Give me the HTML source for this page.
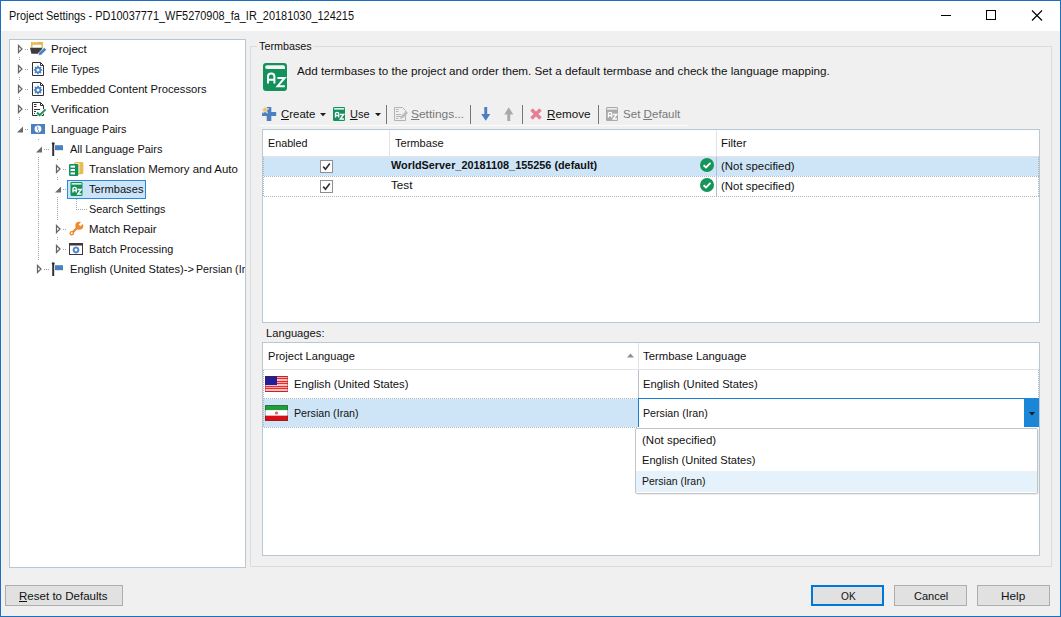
<!DOCTYPE html>
<html><head><meta charset='utf-8'>
<style>
*{box-sizing:border-box;margin:0;padding:0}
html,body{width:1061px;height:617px;overflow:hidden;background:#f0f0f0}
body{position:relative;font-family:"Liberation Sans",sans-serif;font-size:12px;color:#000}
.a{position:absolute}
.t{position:absolute;white-space:nowrap;line-height:14px;font-size:11.5px;transform-origin:0 0;color:#111}
u{text-decoration:none;background:linear-gradient(currentColor,currentColor) 0 100%/100% 1px no-repeat}
.panel{position:absolute;background:#fff;border:1px solid #b9c7d2}
.dv{position:absolute;width:1px;background:repeating-linear-gradient(to bottom,#a3a3a3 0 1px,transparent 1px 2px)}
.dh{position:absolute;height:1px;background:repeating-linear-gradient(to right,#a3a3a3 0 1px,transparent 1px 2px)}
.sep{position:absolute;width:1px;background:#a0a0a0}
.btn{position:absolute;background:#e1e1e1;border:1px solid #adadad}
svg{position:absolute;overflow:visible}

</style></head>
<body>
<div class="a" style="left:0;top:0;width:1061px;height:617px;border:1px solid #1c6fc0"></div>
<div class="a" style="left:1px;top:1px;width:1059px;height:30px;background:#fff"></div>
<div class="a" style="left:941px;top:15px;width:10px;height:1px;background:#000"></div>
<div class="a" style="left:986px;top:10px;width:10px;height:10px;border:1px solid #000"></div>
<svg style="left:1031px;top:10px" width="11" height="11"><path d="M1 0.5L11 10.5M11 0.5L1 10.5" stroke="#000" stroke-width="1.1"/></svg>

<div class="panel" style="left:9px;top:39px;width:237px;height:529px"></div>

<div class="a" style="left:250px;top:46px;width:802px;height:521px;border:1px solid #dcdcdc"></div>
<div class="a" style="left:257px;top:40px;width:56px;height:12px;background:#f0f0f0"></div>

<div class="panel" style="left:262px;top:129px;width:778px;height:194px"></div>
<div class="panel" style="left:262px;top:342px;width:778px;height:214px"></div>

<div class="btn" style="left:5px;top:585px;width:118px;height:21px"></div>
<div class="btn" style="left:811px;top:585px;width:73px;height:21px;border:2px solid #0078d7"></div>
<div class="btn" style="left:894px;top:585px;width:73px;height:21px"></div>
<div class="btn" style="left:977px;top:585px;width:73px;height:21px"></div>

<!-- TABLE 1 content -->
<div class="a" style="left:389px;top:130px;width:1px;height:26px;background:#e3e3e3"></div>
<div class="a" style="left:716px;top:130px;width:1px;height:26px;background:#e3e3e3"></div>
<div class="a" style="left:263px;top:156px;width:776px;height:1px;background:#e3e3e3"></div>
<div class="a" style="left:263px;top:157px;width:776px;height:19px;background:#cde5f7"></div>
<div class="dh" style="left:263px;top:176px;width:776px;background:repeating-linear-gradient(to right,transparent 0 1px,#adbac5 1px 2px)"></div>
<div class="dh" style="left:263px;top:196px;width:776px;background:repeating-linear-gradient(to right,transparent 0 1px,#adbac5 1px 2px)"></div>
<div class="dv" style="left:263px;top:157px;height:40px;background:repeating-linear-gradient(to bottom,#adbac5 0 1px,transparent 1px 2px)"></div>
<div class="dv" style="left:1038px;top:157px;height:40px;background:repeating-linear-gradient(to bottom,#adbac5 0 1px,transparent 1px 2px)"></div>
<div class="a" style="left:716px;top:157px;width:1px;height:39px;background:#b4c0ca"></div>
<div class="a" style="left:320px;top:160px;width:13px;height:13px;border:1px solid #8f8f8f;background:#fff"></div>
<div class="a" style="left:320px;top:180px;width:13px;height:13px;border:1px solid #8f8f8f;background:#fff"></div>
<svg style="left:320px;top:160px" width="13" height="13"><path d="M3.2 6.6L5.5 9.2L9.8 3.6" stroke="#333" stroke-width="1.7" fill="none"/></svg>
<svg style="left:320px;top:180px" width="13" height="13"><path d="M3.2 6.6L5.5 9.2L9.8 3.6" stroke="#333" stroke-width="1.7" fill="none"/></svg>
<svg style="left:700px;top:158px" width="14" height="14"><circle cx="7" cy="7" r="7" fill="#16955a"/><path d="M3.6 7.2L6 9.5L10.5 4.8" stroke="#fff" stroke-width="1.9" fill="none"/></svg>
<svg style="left:700px;top:178px" width="14" height="14"><circle cx="7" cy="7" r="7" fill="#16955a"/><path d="M3.6 7.2L6 9.5L10.5 4.8" stroke="#fff" stroke-width="1.9" fill="none"/></svg>

<!-- TABLE 2 content -->
<div class="a" style="left:263px;top:369px;width:776px;height:1px;background:#e3e3e3"></div>
<div class="a" style="left:638px;top:343px;width:1px;height:26px;background:#e3e3e3"></div>
<div class="a" style="left:638px;top:370px;width:1px;height:28px;background:#b4c0ca"></div>
<svg style="left:627px;top:353px" width="8" height="5"><path d="M0 4.6L3.5 0.6L7 4.6Z" fill="#8f8f8f"/></svg>
<div class="dh" style="left:263px;top:398px;width:776px;background:repeating-linear-gradient(to right,transparent 0 1px,#adbac5 1px 2px)"></div>
<div class="a" style="left:263px;top:399px;width:375px;height:28px;background:#cde5f7"></div>
<div class="dh" style="left:263px;top:427px;width:375px;background:repeating-linear-gradient(to right,transparent 0 1px,#adbac5 1px 2px)"></div>
<div class="dv" style="left:263px;top:370px;height:58px;background:repeating-linear-gradient(to bottom,#adbac5 0 1px,transparent 1px 2px)"></div>
<div class="dv" style="left:1038px;top:370px;height:28px;background:repeating-linear-gradient(to bottom,#adbac5 0 1px,transparent 1px 2px)"></div>
<!-- flags -->
<svg style="left:265px;top:376px" width="23" height="16">
 <rect x="0" y="0" width="23" height="16" fill="#f8a8a8"/>
 <rect y="0" width="23" height="1" fill="#ee2a2a"/><rect y="2" width="23" height="1" fill="#ee2a2a"/><rect y="5" width="23" height="1" fill="#ee2a2a"/><rect y="7" width="23" height="1" fill="#ee2a2a"/><rect y="10" width="23" height="1" fill="#ee2a2a"/><rect y="12" width="23" height="1" fill="#ee2a2a"/><rect y="15" width="23" height="1" fill="#ee2a2a"/>
 <rect y="3.6" width="23" height="0.8" fill="#ffe8e8"/><rect y="8.6" width="23" height="0.8" fill="#ffe8e8"/><rect y="13.6" width="23" height="0.8" fill="#ffe8e8"/>
 <rect x="0" y="0" width="12" height="9" fill="#1f1f9a"/>
 <rect x="0.5" y="0.5" width="22" height="15" fill="none" stroke="rgba(120,20,20,0.35)" stroke-width="1" rx="1"/>
</svg>
<svg style="left:265px;top:405px" width="23" height="16">
 <rect x="0" y="0" width="23" height="5.3" fill="#239c3a"/>
 <rect x="0" y="5.3" width="23" height="5.4" fill="#fff"/>
 <rect x="0" y="10.7" width="23" height="5.3" fill="#d80f16"/>
 <circle cx="11.5" cy="8" r="1.6" fill="#e06060"/>
 <rect x="0.5" y="0.5" width="22" height="15" fill="none" stroke="rgba(40,40,40,0.3)" stroke-width="1" rx="1"/>
</svg>
<!-- combo -->
<div class="a" style="left:638px;top:398px;width:401px;height:29px;background:#fff;border:1px solid #1a7fd4;border-bottom:none"></div>
<div class="a" style="left:1024px;top:398px;width:15px;height:29px;background:#1a86d8"></div>
<svg style="left:1029px;top:412px" width="6" height="4"><path d="M0 0H6L3 3.5Z" fill="#1b1b1b"/></svg>
<!-- dropdown -->
<div class="a" style="left:635px;top:428px;width:403px;height:66px;background:#fff;border:1px solid #c4c4c4;border-radius:2px;box-shadow:1px 1px 1px rgba(0,0,0,0.08)"></div>
<div class="a" style="left:636px;top:471px;width:401px;height:21px;background:#e5f1fb"></div>

<!-- AZ big icon -->
<svg style="left:263px;top:63px" width="24" height="28" viewBox="0 0 24 28">
 <rect width="24" height="28" rx="3" fill="#12925a"/>
 <path d="M4 2.2H20.5A1.9 1.9 0 0 1 22 4.1V6H4A1.9 1.9 0 0 1 4 2.2Z" fill="#f4f4f4"/>
 <path d="M5 20.5V13.4Q5 10.6 8.2 10.6Q11.4 10.6 11.4 13.4V20.5M5 16.8H11.4" stroke="#fff" stroke-width="2" fill="none"/>
 <path d="M14.4 15H21.6L14.6 23.2H21.8" stroke="#fff" stroke-width="2" fill="none"/>
</svg>

<!-- toolbar -->
<div class="a" style="left:259px;top:125px;width:430px;height:1px;background:#fbfbfb"></div>
<svg style="left:261px;top:106px" width="16" height="16">
 <rect x="5.7" y="1" width="4.6" height="14" fill="#4b7fc0"/>
 <rect x="1" y="6" width="14.2" height="4" fill="#4b7fc0"/>
 <path d="M4 0L5.1 2.6L7.9 2.7L5.7 4.5L6.5 7.2L4 5.6L1.5 7.2L2.3 4.5L0.1 2.7L2.9 2.6Z" fill="#f0c060" stroke="#f0f0f0" stroke-width="0.6"/>
</svg>
<svg style="left:320px;top:113px" width="6" height="4"><path d="M0 0H6L3 3.2Z" fill="#1b1b1b"/></svg>
<svg style="left:333px;top:107px" width="12" height="14" viewBox="0 0 24 28">
 <rect width="24" height="28" rx="2.5" fill="#12925a"/>
 <rect x="2.2" y="2.2" width="20" height="3" fill="#f4f4f4"/>
 <path d="M4.9 21V14Q4.9 10.6 8.2 10.6Q11.5 10.6 11.5 14V21M4.9 17H11.5" stroke="#fff" stroke-width="2.6" fill="none"/>
 <path d="M14 15H21.5L14.5 24H22" stroke="#fff" stroke-width="2.6" fill="none"/>
</svg>
<svg style="left:375px;top:113px" width="6" height="4"><path d="M0 0H6L3 3.2Z" fill="#1b1b1b"/></svg>
<div class="sep" style="left:386px;top:105px;height:19px;background:#767676"></div>
<svg style="left:394px;top:107px" width="15" height="14">
 <path d="M0.5 0.5H8.5L11.5 3.5V13.5H0.5Z" fill="none" stroke="#b3b3b3" stroke-width="1"/>
 <path d="M2 2.5H4.5M2 4.5H4.5M2 7.5H7M2 9.5H7M2 11.5H4.5" stroke="#b3b3b3" stroke-width="1"/>
 <path d="M6 12L7 9L12 4L14 6L9 11Z" fill="#bcbcbc"/>
</svg>
<div class="sep" style="left:470px;top:105px;height:19px;background:#767676"></div>
<svg style="left:481px;top:107px" width="10" height="14"><path d="M3.3 0H6.2V7H9.3L4.75 13.8L0.2 7H3.3Z" fill="#4a7fc0"/></svg>
<svg style="left:504px;top:107px" width="10" height="14"><path d="M3.3 14H6.2V7.5H9.3L4.75 0.2L0.2 7.5H3.3Z" fill="#a9a9a9"/></svg>
<div class="sep" style="left:522px;top:105px;height:19px;background:#767676"></div>
<svg style="left:530px;top:108px" width="12" height="12"><path d="M1.5 1.5L10.5 10.5M10.5 1.5L1.5 10.5" stroke="#e67f95" stroke-width="3.4"/></svg>
<div class="sep" style="left:598px;top:105px;height:19px;background:#767676"></div>
<svg style="left:606px;top:107px" width="12" height="14" viewBox="0 0 24 28">
 <rect width="24" height="28" rx="2.5" fill="#aaaaaa"/>
 <rect x="2.2" y="2.2" width="20" height="3" fill="#f4f4f4"/>
 <path d="M4.9 21V14Q4.9 10.6 8.2 10.6Q11.5 10.6 11.5 14V21M4.9 17H11.5" stroke="#fff" stroke-width="2.6" fill="none"/>
 <path d="M14 15H21.5L14.5 24H22" stroke="#fff" stroke-width="2.6" fill="none"/>
</svg>

<!-- TREE -->
<div class="dv" style="left:19px;top:57px;height:3px"></div>
<div class="dv" style="left:19px;top:77px;height:3px"></div>
<div class="dv" style="left:19px;top:97px;height:3px"></div>
<div class="dv" style="left:19px;top:117px;height:3px"></div>
<div class="dv" style="left:38px;top:139px;height:1px"></div>
<div class="dv" style="left:38px;top:157px;height:103px"></div>
<div class="dv" style="left:57px;top:159px;height:1px"></div>
<div class="dv" style="left:57px;top:177px;height:3px"></div>
<div class="dv" style="left:57px;top:197px;height:23px"></div>
<div class="dv" style="left:57px;top:237px;height:3px"></div>
<div class="dv" style="left:76px;top:199px;height:11px"></div>
<div class="dh" style="left:78px;top:209px;width:9px"></div>
<div class="dh" style="left:25px;top:49px;width:4px"></div>
<div class="dh" style="left:25px;top:69px;width:4px"></div>
<div class="dh" style="left:25px;top:89px;width:4px"></div>
<div class="dh" style="left:25px;top:109px;width:4px"></div>
<div class="dh" style="left:25px;top:129px;width:4px"></div>
<div class="dh" style="left:44px;top:149px;width:5px"></div>
<div class="dh" style="left:44px;top:269px;width:5px"></div>
<div class="dh" style="left:63px;top:169px;width:4px"></div>
<div class="dh" style="left:63px;top:189px;width:4px"></div>
<div class="dh" style="left:63px;top:229px;width:4px"></div>
<div class="dh" style="left:63px;top:249px;width:4px"></div>
<!-- triangles -->
<svg style="left:16px;top:44px" width="8" height="11"><rect x="0" y="0" width="8" height="11" fill="#fff"/><path d="M2.5 1.5L6 5L2.5 8.5Z" fill="#fff" stroke="#676767" stroke-width="1.25"/></svg>
<svg style="left:16px;top:64px" width="8" height="11"><rect x="0" y="0" width="8" height="11" fill="#fff"/><path d="M2.5 1.5L6 5L2.5 8.5Z" fill="#fff" stroke="#676767" stroke-width="1.25"/></svg>
<svg style="left:16px;top:84px" width="8" height="11"><rect x="0" y="0" width="8" height="11" fill="#fff"/><path d="M2.5 1.5L6 5L2.5 8.5Z" fill="#fff" stroke="#676767" stroke-width="1.25"/></svg>
<svg style="left:16px;top:104px" width="8" height="11"><rect x="0" y="0" width="8" height="11" fill="#fff"/><path d="M2.5 1.5L6 5L2.5 8.5Z" fill="#fff" stroke="#676767" stroke-width="1.25"/></svg>
<svg style="left:16px;top:124px" width="8" height="10"><rect x="0" y="0" width="8" height="10" fill="#fff"/><path d="M1 8.5L7 2.5V8.5Z" fill="#6a6a6a"/></svg>
<svg style="left:35px;top:144px" width="8" height="10"><rect x="0" y="0" width="8" height="10" fill="#fff"/><path d="M1 8.5L7 2.5V8.5Z" fill="#6a6a6a"/></svg>
<svg style="left:35px;top:264px" width="8" height="11"><rect x="0" y="0" width="8" height="11" fill="#fff"/><path d="M2.5 1.5L6 5L2.5 8.5Z" fill="#fff" stroke="#676767" stroke-width="1.25"/></svg>
<svg style="left:54px;top:164px" width="8" height="11"><rect x="0" y="0" width="8" height="11" fill="#fff"/><path d="M2.5 1.5L6 5L2.5 8.5Z" fill="#fff" stroke="#676767" stroke-width="1.25"/></svg>
<svg style="left:54px;top:184px" width="8" height="10"><rect x="0" y="0" width="8" height="10" fill="#fff"/><path d="M1 8.5L7 2.5V8.5Z" fill="#6a6a6a"/></svg>
<svg style="left:54px;top:224px" width="8" height="11"><rect x="0" y="0" width="8" height="11" fill="#fff"/><path d="M2.5 1.5L6 5L2.5 8.5Z" fill="#fff" stroke="#676767" stroke-width="1.25"/></svg>
<svg style="left:54px;top:244px" width="8" height="11"><rect x="0" y="0" width="8" height="11" fill="#fff"/><path d="M2.5 1.5L6 5L2.5 8.5Z" fill="#fff" stroke="#676767" stroke-width="1.25"/></svg>

<!-- tree icons -->
<svg style="left:30px;top:42px" width="17" height="15">
 <rect x="1" y="0" width="12" height="2.8" fill="#e6b64a"/>
 <rect x="2.5" y="0.3" width="1.6" height="1" fill="#f7e3b0"/><rect x="5.5" y="0.3" width="1.6" height="1" fill="#f7e3b0"/>
 <path d="M1.8 2V5.8M12.2 2V5.8" stroke="#e6b64a" stroke-width="1.4"/>
 <path d="M0 5.8H12.4L10.4 11.8H1.4Z" fill="#3d3d3d"/>
 <path d="M8.3 13.8L9 10.6L14.2 5.4L16.6 7.8L11.4 13Z" fill="#4a80c6" stroke="#fff" stroke-width="0.7"/>
</svg>
<svg style="left:32px;top:62px" width="13" height="14">
 <path d="M0.5 0.5H8.5L11.5 3.5V13.5H0.5Z" fill="#fff" stroke="#333" stroke-width="1"/>
 <path d="M8.5 0.5V3.5H11.5" fill="none" stroke="#333" stroke-width="1"/>
 <circle cx="6" cy="8" r="2.4" fill="none" stroke="#4a80c6" stroke-width="1.8"/>
 <path d="M6 3.8V5.2M6 10.8V12.2M1.8 8H3.2M8.8 8H10.2M3 5L4 6M8 10L9 11M9 5L8 6M4 10L3 11" stroke="#4a80c6" stroke-width="1.6"/>
</svg>
<svg style="left:32px;top:82px" width="13" height="14">
 <path d="M0.5 0.5H8.5L11.5 3.5V13.5H0.5Z" fill="#fff" stroke="#333" stroke-width="1"/>
 <path d="M8.5 0.5V3.5H11.5" fill="none" stroke="#333" stroke-width="1"/>
 <circle cx="6" cy="8" r="2.4" fill="none" stroke="#4a80c6" stroke-width="1.8"/>
 <path d="M6 3.8V5.2M6 10.8V12.2M1.8 8H3.2M8.8 8H10.2M3 5L4 6M8 10L9 11M9 5L8 6M4 10L3 11" stroke="#4a80c6" stroke-width="1.6"/>
</svg>
<svg style="left:32px;top:102px" width="15" height="15">
 <path d="M0.5 0.5H8.5L11.5 3.5V13.5H0.5Z" fill="#fff" stroke="#333" stroke-width="1"/>
 <path d="M8.5 0.5V3.5H11.5" fill="none" stroke="#333" stroke-width="1"/>
 <path d="M2 2.5H4.5M2 4.5H4.5M2 7.5H8M2 9.5H4M2 11.5H3" stroke="#333" stroke-width="1"/>
 <path d="M5 10.5L7.6 13.2L13.6 7.4" fill="none" stroke="#fff" stroke-width="3.4"/>
 <path d="M5 10.5L7.6 13.2L13.6 7.4" fill="none" stroke="#16955a" stroke-width="2"/>
</svg>
<svg style="left:31px;top:124px" width="14" height="10">
 <rect width="14" height="10" fill="#4a80c0"/>
 <circle cx="7" cy="5" r="3.4" fill="#fff"/>
 <path d="M5.6 2.6L7.2 3.8L6.4 5.4L7.8 6.8L7.4 8" stroke="#4a80c0" stroke-width="0.9" fill="none"/>
</svg>
<svg style="left:51px;top:142px" width="13" height="15">
 <rect x="1.2" y="1.5" width="2" height="12.5" fill="#333"/>
 <circle cx="2.2" cy="1.6" r="1.4" fill="#333"/>
 <path d="M4 3.2H12V8.2H4Z" fill="#4a80c0"/>
</svg>
<svg style="left:51px;top:262px" width="13" height="15">
 <rect x="1.2" y="1.5" width="2" height="12.5" fill="#333"/>
 <circle cx="2.2" cy="1.6" r="1.4" fill="#333"/>
 <path d="M4 3.2H12V8.2H4Z" fill="#4a80c0"/>
</svg>
<svg style="left:69px;top:162px" width="15" height="15">
 <rect x="5.6" y="0.6" width="8.2" height="11" rx="1" fill="#fbeecd" stroke="#e8bd55" stroke-width="1.2"/>
 <rect x="10.5" y="0.5" width="3.5" height="11.4" fill="#e8bd55"/>
 <rect x="0" y="2" width="9.3" height="12" rx="1.2" fill="#12925a"/>
 <rect x="1.5" y="3.6" width="4.5" height="2" fill="#fff"/>
 <rect x="1.5" y="7" width="4.5" height="2" fill="#fff"/>
 <rect x="1.5" y="10.4" width="4.5" height="2" fill="#fff"/>
</svg>
<div class="a" style="left:67px;top:180px;width:79px;height:19px;background:#cce4f7;border:1px solid #2a88df"></div>
<svg style="left:70px;top:182px" width="13" height="14" viewBox="0 0 24 28">
 <rect width="24" height="28" rx="2.5" fill="#12925a"/>
 <rect x="2.2" y="2.2" width="20" height="3" fill="#f4f4f4"/>
 <path d="M4.9 21V14Q4.9 10.6 8.2 10.6Q11.5 10.6 11.5 14V21M4.9 17H11.5" stroke="#fff" stroke-width="2.6" fill="none"/>
 <path d="M14 15H21.5L14.5 24H22" stroke="#fff" stroke-width="2.6" fill="none"/>
</svg>
<svg style="left:69px;top:221px" width="15" height="15">
 <path d="M3 12L9 6" stroke="#ee8a30" stroke-width="2.4" stroke-linecap="round"/>
 <circle cx="2.8" cy="12.2" r="2.3" fill="#ee8a30"/>
 <circle cx="2.8" cy="12.2" r="0.9" fill="#fff"/>
 <circle cx="10.3" cy="4.7" r="4" fill="#ee8a30"/>
 <path d="M10.6 4.4L15 0" stroke="#fff" stroke-width="2.6"/>
</svg>
<svg style="left:69px;top:243px" width="15" height="13">
 <rect x="0.5" y="0.5" width="13" height="11" fill="#fff" stroke="#3a3a3a" stroke-width="1"/>
 <rect x="0" y="0" width="14" height="2.5" fill="#3a3a3a"/>
 <circle cx="7" cy="7" r="2.2" fill="none" stroke="#4a80c6" stroke-width="1.6"/>
 <path d="M7 3.6V4.8M7 9.2V10.4M3.6 7H4.8M9.2 7H10.4M4.6 4.6L5.4 5.4M8.6 8.6L9.4 9.4M9.4 4.6L8.6 5.4M5.4 8.6L4.6 9.4" stroke="#4a80c6" stroke-width="1.5"/>
</svg>

<div class='t' style='left:9.10px;top:9px;transform:scaleX(0.8740);font-size:12.5px'>Project Settings - PD10037771_WF5270908_fa_IR_20181030_124215</div>
<div class='t' style='left:51.10px;top:42px;transform:scaleX(0.9973);'>Project</div>
<div class='t' style='left:51.10px;top:62px;transform:scaleX(0.9270);'>File Types</div>
<div class='t' style='left:51.10px;top:82px;transform:scaleX(0.9736);'>Embedded Content Processors</div>
<div class='t' style='left:51.10px;top:102px;transform:scaleX(1.0290);'>Verification</div>
<div class='t' style='left:51.10px;top:122px;transform:scaleX(0.9371);'>Language Pairs</div>
<div class='t' style='left:70.10px;top:142px;transform:scaleX(0.9581);'>All Language Pairs</div>
<div class='t' style='left:89.10px;top:162px;transform:scaleX(0.9933);'>Translation Memory and Auto</div>
<div class='t' style='left:89.10px;top:182px;transform:scaleX(0.9680);'>Termbases</div>
<div class='t' style='left:89.10px;top:202px;transform:scaleX(0.9410);'>Search Settings</div>
<div class='t' style='left:89.10px;top:222px;transform:scaleX(0.9884);'>Match Repair</div>
<div class='t' style='left:89.10px;top:242px;transform:scaleX(0.9408);'>Batch Processing</div>
<div class='t' style='left:70.10px;top:262px;transform:scaleX(0.9667);'>English (United States)-&gt;</div>
<div class='a' style='left:195.2px;top:262px;width:49.8px;height:16px;overflow:hidden'><div class='t' style='left:0.4px;top:0;transform:scaleX(0.9272)'>Persian (Iran)</div></div>
<div class='t' style='left:259.10px;top:39px;transform:scaleX(0.9369);'>Termbases</div>
<div class='t' style='left:296.70px;top:64px;transform:scaleX(1.0125);'>Add termbases to the project and order them. Set a default termbase and check the language mapping.</div>
<div class='t' style='left:280.80px;top:107px;transform:scaleX(0.9933);'><u>C</u>reate</div>
<div class='t' style='left:349.70px;top:107px;transform:scaleX(0.9527);'><u>U</u>se</div>
<div class='t' style='left:410.80px;top:107px;transform:scaleX(1.0396);color:#787878'><u>S</u>ettings...</div>
<div class='t' style='left:546.50px;top:107px;transform:scaleX(1.0153);'><u>R</u>emove</div>
<div class='t' style='left:622.60px;top:107px;transform:scaleX(1.0066);color:#787878'>Set <u>D</u>efault</div>
<div class='t' style='left:267.60px;top:136px;transform:scaleX(0.9353);'>Enabled</div>
<div class='t' style='left:394.80px;top:136px;transform:scaleX(0.9621);'>Termbase</div>
<div class='t' style='left:720.80px;top:136px;transform:scaleX(0.9968);'>Filter</div>
<div class='t' style='left:390.70px;top:158px;transform:scaleX(0.9440);font-weight:bold'>WorldServer_20181108_155256 (default)</div>
<div class='t' style='left:390.70px;top:178px;transform:scaleX(1.0145);'>Test</div>
<div class='t' style='left:720.80px;top:159px;transform:scaleX(0.9927);'>(Not specified)</div>
<div class='t' style='left:720.80px;top:179px;transform:scaleX(0.9927);'>(Not specified)</div>
<div class='t' style='left:265.80px;top:326px;transform:scaleX(0.9730);'>Languages:</div>
<div class='t' style='left:267.70px;top:349px;transform:scaleX(0.9639);'>Project Language</div>
<div class='t' style='left:642.70px;top:349px;transform:scaleX(0.9853);'>Termbase Language</div>
<div class='t' style='left:293.80px;top:377px;transform:scaleX(0.9723);'>English (United States)</div>
<div class='t' style='left:293.80px;top:406px;transform:scaleX(0.9272);'>Persian (Iran)</div>
<div class='t' style='left:642.70px;top:377px;transform:scaleX(0.9749);'>English (United States)</div>
<div class='t' style='left:642.70px;top:406px;transform:scaleX(0.9286);'>Persian (Iran)</div>
<div class='t' style='left:641.80px;top:433px;transform:scaleX(0.9995);'>(Not specified)</div>
<div class='t' style='left:641.80px;top:453px;transform:scaleX(0.9649);'>English (United States)</div>
<div class='t' style='left:641.80px;top:474px;transform:scaleX(0.9113);'>Persian (Iran)</div>
<div class='t' style='left:19.10px;top:589px;transform:scaleX(1.0043);'><u>R</u>eset to Defaults</div>
<div class='t' style='left:840.70px;top:589px;transform:scaleX(0.8814);'>OK</div>
<div class='t' style='left:913.70px;top:589px;transform:scaleX(0.9578);'>Cancel</div>
<div class='t' style='left:1000.60px;top:589px;transform:scaleX(1.0230);'>Help</div>
</body></html>
